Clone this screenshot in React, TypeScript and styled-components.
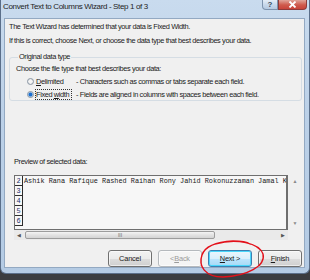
import React from 'react'
import styled, { createGlobalStyle } from 'styled-components'

const GlobalStyle = createGlobalStyle`
  html, body {
    margin: 0;
    padding: 0;
    background: #3a3c40;
  }
  body {
    width: 310px;
    height: 280px;
    overflow: hidden;
    font-family: "Liberation Sans", Arial, sans-serif;
  }
`

const Window = styled.div`
  position: relative;
  width: 310px;
  height: 274px;
  box-sizing: border-box;
  background: linear-gradient(180deg, #c9dbee 0%, #bcd1e8 40%, #b4cbe4 100%);
  border-radius: 0 0 6px 6px;
  border: 1px solid #5b6f8a;
  border-top: none;
  display: flex;
  flex-direction: column;
`

const TitleBar = styled.div`
  height: 18px;
  display: flex;
  align-items: flex-start;
  justify-content: space-between;
  padding-left: 2px;
`

const Title = styled.span`
  font-size: 8px;
  letter-spacing: -0.35px;
  color: #1e1e1e;
  line-height: 14px;
`

const CaptionButtons = styled.div`
  display: flex;
  margin-right: 2px;
`

const CaptionButton = styled.div<{ $close?: boolean }>`
  width: ${p => (p.$close ? 29 : 16)}px;
  height: 10px;
  box-sizing: border-box;
  display: flex;
  align-items: center;
  justify-content: center;
  border: 1px solid ${p => (p.$close ? '#8d3b3b' : '#7d93ad')};
  border-top: none;
  border-radius: 0 0 ${p => (p.$close ? '4px 0' : '0 4px')};
  background: ${p =>
    p.$close
      ? 'linear-gradient(180deg, #e0a59a 0%, #cf5a4c 55%, #c9443a 100%)'
      : 'linear-gradient(180deg, #e4edf7 0%, #c6d7ea 55%, #b5c9e0 100%)'};
  color: ${p => (p.$close ? '#fff' : '#3c4a5c')};
  font-size: 8px;
  font-weight: bold;
  line-height: 1;
`

const Client = styled.div`
  margin: 0 4px 0 3px;
  height: 250px;
  background: #f0f0f0;
  border: 1px solid #93a9c2;
  box-sizing: border-box;
  display: flex;
  flex-direction: column;
  padding: 1px 1px 0 4px;
  font-size: 7.4px;
  letter-spacing: -0.38px;
  color: #1a1a1a;
`

const Line = styled.div`
  line-height: 14px;
  white-space: nowrap;
`

const Group = styled.fieldset`
  margin: 3px 1px 0 0;
  padding: 0 0 3px 6px;
  border: 1px solid #d5dde4;
  border-radius: 3px;
  height: 50px;
  box-sizing: border-box;
`

const Legend = styled.legend`
  padding: 0 1px;
  margin-left: 2px;
  line-height: 12px;
`

const GroupText = styled.div`
  line-height: 13px;
  margin-top: -1px;
`

const OptionRow = styled.div`
  display: flex;
  align-items: center;
  height: 13px;
`

const Radio = styled.span<{ $checked?: boolean }>`
  width: 7px;
  height: 7px;
  box-sizing: border-box;
  margin: 0 2px 0 11px;
  border-radius: 50%;
  border: 1px solid #8a96a3;
  background: ${p =>
    p.$checked
      ? 'radial-gradient(circle, #1d6fcf 0 1.6px, #9cc4ec 2.2px, #eef3f8 3px)'
      : 'radial-gradient(circle, #f4f4f4 0 1.5px, #dadde0 3px)'};
`

const OptionLabel = styled.span<{ $focused?: boolean }>`
  width: ${p => (p.$focused ? 35 : 40)}px;
  outline: ${p => (p.$focused ? '1px dotted #333' : 'none')};
  outline-offset: 0;
  line-height: 9px;
  margin-right: ${p => (p.$focused ? 5 : 0)}px;
`

const Key = styled.span`
  text-decoration: underline;
`

const PreviewLabel = styled.div`
  margin-top: 54px;
  margin-bottom: 6px;
  margin-left: 5px;
  line-height: 14px;
`

const PreviewArea = styled.div`
  margin: 0 0 0 5px;
  display: grid;
  grid-template-columns: 274px 14px;
  grid-template-rows: 55px 10px;
`

const PreviewBox = styled.div`
  border: 1px solid #6f6f6f;
  border-right-width: 2px;
  box-sizing: border-box;
  background: #f7f7f7;
  overflow: hidden;
  display: flex;
  flex-direction: column;
`

const PreviewRow = styled.div`
  display: flex;
  height: 10px;
  font-family: "Liberation Mono", "Courier New", monospace;
  font-size: 6.85px;
  letter-spacing: 0;
  line-height: 10px;
  white-space: nowrap;
  overflow: hidden;
`

const RowNum = styled.span`
  width: 8px;
  flex: none;
  box-sizing: border-box;
  border-right: 1px solid #2d2d2d;
  border-bottom: 1px solid #2d2d2d;
  text-align: center;
  color: #1b2f6a;
  margin-right: 1px;
`

const VScroll = styled.div`
  display: flex;
  flex-direction: column;
  justify-content: space-between;
  align-items: center;
  padding: 3px 0 4px;
  color: #8a8a8a;
  font-size: 5px;
  letter-spacing: 0;
`

const HScroll = styled.div`
  display: flex;
  align-items: center;
  gap: 2px;
  padding: 0 3px;
  color: #555;
  font-size: 5px;
  letter-spacing: 0;
  background: #eaeaea;
`

const Thumb = styled.div`
  width: 190px;
  height: 8px;
  box-sizing: border-box;
  border: 1px solid #9c9c9c;
  border-radius: 2px;
  background: linear-gradient(180deg, #f4f4f4 0%, #e2e2e2 50%, #d4d4d4 100%);
  display: flex;
  align-items: center;
  justify-content: center;
  color: #666;
  font-size: 5px;
  margin-left: 2px;
`

const Track = styled.div`
  flex: 1;
`

const ButtonRow = styled.div`
  display: flex;
  justify-content: flex-end;
  gap: 6px;
  margin-top: 10px;
  padding-right: 1px;
`

const Button = styled.div<{ $variant?: 'default' | 'disabled' | 'focus' }>`
  width: 44px;
  height: 17px;
  box-sizing: border-box;
  border-radius: 3px;
  display: flex;
  align-items: center;
  justify-content: center;
  font-size: 7.4px;
  letter-spacing: -0.2px;
  border: 1px solid
    ${p => (p.$variant === 'focus' ? '#3c7fb1' : p.$variant === 'disabled' ? '#b5b9bd' : '#707070')};
  color: ${p => (p.$variant === 'disabled' ? '#9a9a9a' : '#1a1a1a')};
  background: ${p =>
    p.$variant === 'focus'
      ? 'linear-gradient(180deg, #eaf6fd 0%, #d9f0fc 50%, #bee6fd 51%, #a7d9f5 100%)'
      : p.$variant === 'disabled'
      ? '#f4f4f4'
      : 'linear-gradient(180deg, #f2f2f2 0%, #ebebeb 50%, #dddddd 51%, #cfcfcf 100%)'};
  box-shadow: inset 0 0 0 1px ${p => (p.$variant === 'focus' ? '#48d7fb' : 'rgba(255,255,255,0.6)')};
`

const Scribble = styled.svg`
  position: absolute;
  left: 0;
  top: 0;
  pointer-events: none;
`

const rows = ['2', '3', '4', '5', '6']
const data = 'Ashik Rana Rafique Rashed Raihan Rony Jahid Rokonuzzaman Jamal K'

export default function App() {
  return (
    <>
      <GlobalStyle />
      <Window>
        <TitleBar>
          <Title>Convert Text to Columns Wizard - Step 1 of 3</Title>
          <CaptionButtons>
            <CaptionButton>?</CaptionButton>
            <CaptionButton $close>
              <svg width="9" height="7" viewBox="0 0 9 7">
                <path d="M1.5 0.5 L7.5 6.5 M7.5 0.5 L1.5 6.5" stroke="#fff" strokeWidth="1.8" />
              </svg>
            </CaptionButton>
          </CaptionButtons>
        </TitleBar>
        <Client>
          <Line>The Text Wizard has determined that your data is Fixed Width.</Line>
          <Line>If this is correct, choose Next, or choose the data type that best describes your data.</Line>
          <Group>
            <Legend>Original data type</Legend>
            <GroupText>Choose the file type that best describes your data:</GroupText>
            <OptionRow>
              <Radio />
              <OptionLabel><Key>D</Key>elimited</OptionLabel>
              <span>- Characters such as commas or tabs separate each field.</span>
            </OptionRow>
            <OptionRow>
              <Radio $checked />
              <OptionLabel $focused>Fixed <Key>w</Key>idth</OptionLabel>
              <span>- Fields are aligned in columns with spaces between each field.</span>
            </OptionRow>
          </Group>
          <PreviewLabel>Preview of selected data:</PreviewLabel>
          <PreviewArea>
            <PreviewBox>
              {rows.map((n, i) => (
                <PreviewRow key={n}>
                  <RowNum>{n}</RowNum>
                  {i === 0 ? data : ''}
                </PreviewRow>
              ))}
            </PreviewBox>
            <VScroll>
              <span>▲</span>
              <span>▼</span>
            </VScroll>
            <HScroll>
              <span>◀</span>
              <Thumb>III</Thumb>
              <Track />
              <span>▶</span>
            </HScroll>
          </PreviewArea>
          <ButtonRow>
            <Button>Cancel</Button>
            <Button $variant="disabled">&lt; <Key>B</Key>ack</Button>
            <Button $variant="focus"><Key>N</Key>ext &gt;</Button>
            <Button><Key>F</Key>inish</Button>
          </ButtonRow>
        </Client>
        <Scribble width="310" height="280" viewBox="0 0 310 280">
          <path
            d="M214 244 C236 238 258 243 262 254 C265 266 246 276 222 277 C204 277 197 266 201 255 C204 246 214 242 232 241 C240 241 246 242 249 244"
            fill="none"
            stroke="#e3101a"
            strokeWidth="1.4"
            strokeLinecap="round"
          />
        </Scribble>
      </Window>
    </>
  )
}
